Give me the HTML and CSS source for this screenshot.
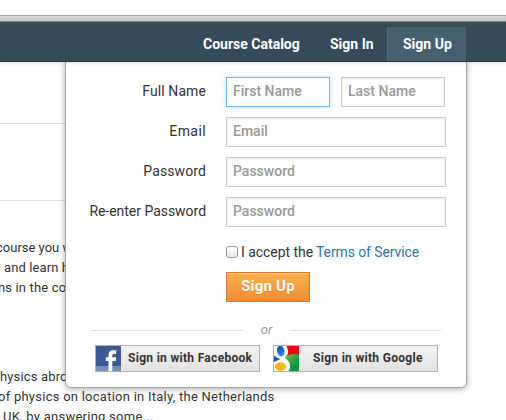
FILE: index.html
```
<!DOCTYPE html>
<html lang="en">
<head>
<meta charset="utf-8">
<title>Sign Up</title>
<link rel="stylesheet" href="styles.css">
</head>
<body>
<div class="chrome"></div>
<header class="topbar">
  <nav class="nav">
    <a class="nav-item catalog"><span class="t">Course Catalog</span></a>
    <a class="nav-item signin"><span class="t">Sign In</span></a>
    <a class="nav-item active"><span class="t">Sign Up</span></a>
  </nav>
</header>
<main class="page">
  <div class="band"></div>
  <div class="copy first">
    <p class="l1">course you w</p>
    <p class="l2">and learn h</p>
    <p class="l3">ns in the co</p>
  </div>
  <div class="copy second">
    <p class="l4">hysics abro</p>
    <p class="l5">of physics on location in Italy, the Netherlands</p>
    <p class="l6">UK, by answering some...</p>
  </div>
</main>
<section class="panel">
  <form class="form">
    <div class="row"><label>Full Name</label><div class="fields"><div class="input focus">First Name</div><div class="input">Last Name</div></div></div>
    <div class="row"><label class="wide">Email</label><div class="input">Email</div></div>
    <div class="row"><label>Password</label><div class="input">Password</div></div>
    <div class="row"><label class="tight">Re-enter Password</label><div class="input">Password</div></div>
    <div class="terms"><span class="check"></span><span class="accept">I accept the</span><a class="tos">Terms of Service</a></div>
    <div class="submit">Sign Up</div>
  </form>
  <div class="divider"><span class="rule"></span><em>or</em><span class="rule right"></span></div>
  <div class="social">
    <div class="provider">
      <svg width="25" height="25" viewBox="0 0 25 25"><rect width="25" height="25" fill="#3b5998"/><rect y="20" width="25" height="5" fill="#718dc0"/><path d="M12.500 25V15H9.800v-3.700h2.700V9c0-3.200 1.800-4.700 4.500-4.700h3.200V8h-2c-1.400 0-1.900.5-1.900 1.700v1.600h3.900l-.5 3.700h-3.400v10z" fill="#fff"/></svg>
      <span class="fb">Sign in with Facebook</span>
    </div>
    <div class="provider">
      <svg width="25" height="25" viewBox="0 0 25 25">
        <defs>
          <linearGradient id="green" x1="0" y1="0" x2="1" y2="1"><stop offset="0" stop-color="#72c243"/><stop offset=".7" stop-color="#079a3d"/></linearGradient>
          <linearGradient id="blue" x1="0" y1="0" x2="0" y2="1"><stop offset="0" stop-color="#0b50b5"/><stop offset="1" stop-color="#2a8cf0"/></linearGradient>
        </defs>
        <rect width="25" height="25" fill="#fff"/>
        <path d="M12.500 0H25v10H12.500q2.500-3 1.300-6.500z" fill="#f00406"/>
        <path d="M10.800 11.500Q16 6.500 25 8.500V25H14.500q3-5 .5-9z" fill="url(#green)"/>
        <path d="M0 9.500q3 3 6.500 3.500L0 16z" fill="#0d51ad"/>
        <ellipse cx="6.700" cy="5" rx="3.700" ry="5.300" transform="rotate(-12 6.700 5)" fill="url(#blue)"/>
        <ellipse cx="6.500" cy="20.500" rx="5.700" ry="4.200" fill="#f3b70e"/>
      </svg>
      <span class="go">Sign in with Google</span>
    </div>
  </div>
</section>
</body>
</html>
```
FILE: styles.css
```
* { box-sizing: border-box; }
html, body { height: 100%; }
body {
  margin: 0;
  overflow: hidden;
  background: #fff;
  color: #333;
  font: 14px/20px Roboto, "Liberation Sans", sans-serif;
}
.chrome {
  height: 22px;
  background: linear-gradient(#fff 15px, #a7aba8 15px, #a7aba8 16px, #dadada 16px, #cbcccb 18px, #cbcccb 21px, #858989 21px);
}
.topbar {
  position: relative;
  z-index: 3;
  height: 40px;
  padding: 5px 40px 0 0;
  background: #364b5a;
  border-bottom: 1px solid #273444;
  box-shadow: 0 1px 4px rgba(0, 0, 0, .12);
}
.nav { display: flex; justify-content: flex-end; height: 34px; }
.nav-item {
  display: flex;
  align-items: center;
  color: #fff;
  font-weight: 700;
  white-space: nowrap;
}
.catalog { width: 127px; }
.signin { width: 57px; }
.active { width: 79px; padding-left: 15px; background: #466070; border-left: 1px solid #5b6d79; }

.page { white-space: nowrap; }
.band { height: 78px; margin-top: 61px; border: solid #ddd; border-width: 1px 0; width: 67px; }
.copy p { margin: 0; letter-spacing: .25px; font-size: 13px; }
.first { margin-top: 37px; }
.second { margin-top: 69px; }
.copy .l1 { margin-left: -4px; letter-spacing: 0; }
.copy .l2 { margin-left: 4px; letter-spacing: .1px; }
.copy .l3 { margin-left: -2px; letter-spacing: .15px; }
.copy .l4 { letter-spacing: .15px; }
.copy .l5 { margin-left: -2px; }
.copy .l6 { margin-left: 3px; }

.panel {
  position: absolute;
  z-index: 2;
  left: 65px;
  top: 61px;
  width: 402px;
  height: 327px;
  padding: 15px 20px 0 24px;
  background: #fff;
  border: 1px solid #a5a5a5;
  border-radius: 0 0 6px 6px;
  box-shadow: 0 1px 6px rgba(0, 0, 0, .35);
}
.row { display: flex; gap: 20px; height: 30px; margin-bottom: 10px; }
.row label {
  width: 116px;
  display: flex;
  justify-content: flex-end;
  align-items: center;
  padding-bottom: 2px;
  white-space: nowrap;
  letter-spacing: .1px;
}
.row .wide { letter-spacing: .4px; }
.row .tight { letter-spacing: -.03px; }
.fields { display: flex; gap: 11px; }
.input {
  width: 220px;
  height: 30px;
  padding: 0 6px;
  line-height: 27px;
  color: #999;
  font-weight: 500;
  background: #fff;
  border: 1px solid #c8c8c8;
  box-shadow: inset 0 1px 2px rgba(0, 0, 0, .08);
}
.fields .input { width: 104px; white-space: nowrap; }
.input.focus { border-color: #6bb4ee; box-shadow: 0 0 6px rgba(85, 175, 245, .4); }
.terms { display: flex; align-items: center; height: 20px; margin: 15px 0 0 136px; white-space: nowrap; }
.check {
  width: 12px;
  height: 12px;
  margin-right: 3px;
  border: 1px solid #999;
  border-radius: 3px;
  background: linear-gradient(#fff, #e6e6e6);
}
.accept { width: 75px; letter-spacing: -.05px; }
.tos { color: #2679a4; letter-spacing: -.1px; }
.submit {
  width: 84px;
  height: 30px;
  margin: 10px 0 0 136px;
  border: 1px solid #d17a3d;
  background: linear-gradient(#fab14a, #f18c35);
  box-shadow: inset 0 1px 0 rgba(255, 220, 140, .5);
  color: #fff;
  font-size: 15px;
  font-weight: 700;
  letter-spacing: .2px;
  line-height: 27px;
  text-align: center;
  text-shadow: 0 1px 1px rgba(150, 80, 0, .3);
}
.divider { display: flex; align-items: center; height: 20px; margin: 18px 0 0 1px; }
.rule { width: 152px; height: 1px; background: #ddd; }
.divider em { width: 47px; text-align: center; color: #999; font-size: 13px; }
.right { width: 151px; }
.social { display: flex; gap: 13px; margin: 5px 0 0 5px; }
.provider {
  display: flex;
  width: 165px;
  height: 27px;
  border: 1px solid #b0b0b0;
  background: linear-gradient(#f2f2f2, #e2e2e2);
  font-size: 12px;
  font-weight: 700;
  letter-spacing: .3px;
  line-height: 25px;
  white-space: nowrap;
}
.provider svg { flex: none; }
.fb { margin-left: 7px; }
.go { margin-left: 14px; }
```
